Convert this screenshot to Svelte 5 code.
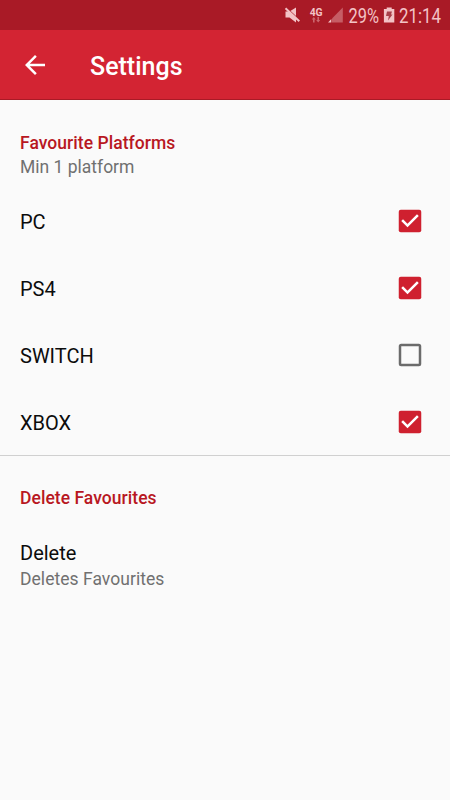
<script lang="ts">
  let platforms = $state([
    { name: "PC", checked: true },
    { name: "PS4", checked: true },
    { name: "SWITCH", checked: false },
    { name: "XBOX", checked: true },
  ]);
</script>

<div class="screen">
  <div class="status">
    <svg width="450" height="30" viewBox="0 0 450 30">
      <g fill="#f3c3c6">
        <path d="M285.5 11.5h4l6.5-4v15l-6.5-5h-4z" />
        <path d="M287 8.3l13.5 12.5" stroke="#a91a26" stroke-width="1.1" />
        <path d="M285.5 8.3l13.8 13" stroke="#f3c3c6" stroke-width="2" />
        <text class="net" x="309.7" y="15.5" textLength="13" lengthAdjust="spacingAndGlyphs">4G</text>
        <path d="M313.8 17l2 2.5h-1.2v3H313v-3h-1.2zM318.2 22.5l-2-2.5h1.2v-3h1.6v3h1.2z" opacity=".45" />
        <path d="M342.8 7.5v15H332v-4z" opacity=".4" />
        <path d="M331.3 19v3.5H328z" />
        <text x="348.5" y="22.5" textLength="30.5" lengthAdjust="spacingAndGlyphs">29%</text>
        <path d="M386.7 7.5h5V9h2.6v13.5h-10.4V9h2.8z" />
        <path d="M387 11.5h5l-1 3h1.5l-4.5 6 .8-4.5H386z" fill="#a93f49" />
        <text x="399" y="22.5" textLength="42" lengthAdjust="spacingAndGlyphs">21:14</text>
      </g>
    </svg>
  </div>

  <header>
    <button class="back" aria-label="Back">
      <svg width="30" height="30" viewBox="0 0 24 24">
        <path fill="#fff" d="M20 11H7.83l5.59-5.59L12 4l-8 8 8 8 1.41-1.41L7.83 13H20z" />
      </svg>
    </button>
    <h1>Settings</h1>
  </header>

  <section class="platforms">
    <h2>Favourite Platforms</h2>
    <p class="summary">Min 1 platform</p>
    <div class="rows">
      {#each platforms as platform}
        <button
          class="row"
          role="checkbox"
          aria-checked={platform.checked}
          onclick={() => (platform.checked = !platform.checked)}
        >
          <span>{platform.name}</span>
          <svg width="30" height="30" viewBox="0 0 24 24">
            {#if platform.checked}
              <rect x="3" y="3" width="18" height="18" rx="1.6" fill="#cf202f" />
              <path fill="#fff" d="M10 17l-5-5 1.41-1.41L10 14.17l7.59-7.59L19 8z" />
            {:else}
              <rect x="4" y="4" width="16" height="16" rx="1" fill="none" stroke="#6b6b6b" stroke-width="2" />
            {/if}
          </svg>
        </button>
      {/each}
    </div>
  </section>

  <section class="delete">
    <h2>Delete Favourites</h2>
    <button class="action">
      <span>Delete</span>
      <span class="summary">Deletes Favourites</span>
    </button>
  </section>
</div>

<style>
  :global(body) {
    margin: 0;
  }
  .screen {
    width: 450px;
    height: 800px;
    overflow: hidden;
    background: #fafafa;
    color: #0c0c0c;
    font-family: Roboto, sans-serif;
    font-size: 20px;
  }
  button {
    padding: 0;
    border: none;
    background: none;
    color: inherit;
    font: inherit;
    text-align: left;
  }
  svg {
    display: block;
  }
  .status {
    height: 30px;
    background: #a91a26;
  }
  .status text {
    font-size: 19.5px;
  }
  .status .net {
    font-size: 10px;
    font-weight: 700;
  }
  header {
    display: flex;
    align-items: center;
    box-sizing: border-box;
    height: 70px;
    padding-left: 20px;
    border-bottom: 1px solid #a91a26;
    background: #d32433;
    color: #fff;
  }
  .back {
    margin-right: 40px;
  }
  h1 {
    margin: 4px 0 0;
    font-size: 25px;
    font-weight: 500;
    line-height: 30px;
  }
  h2 {
    margin: 0;
    color: #b81722;
    font-size: 17.5px;
    font-weight: 500;
    letter-spacing: 0.04px;
    line-height: 24px;
  }
  .summary {
    margin: 0;
    color: #707070;
    font-size: 17.5px;
    line-height: 24px;
  }
  .platforms {
    padding: 31px 25px 0 20px;
    border-bottom: 1px solid #d0d0d0;
  }
  .rows {
    padding-top: 8px;
  }
  .row {
    display: flex;
    align-items: center;
    justify-content: space-between;
    width: 100%;
    height: 67px;
  }
  .row span {
    padding-top: 2px;
  }
  .delete {
    padding: 30px 20px 0;
  }
  .action {
    display: flex;
    flex-direction: column;
    margin-top: 30px;
    line-height: 26px;
  }
  .action .summary {
    letter-spacing: 0.04px;
    line-height: 26px;
  }
</style>
